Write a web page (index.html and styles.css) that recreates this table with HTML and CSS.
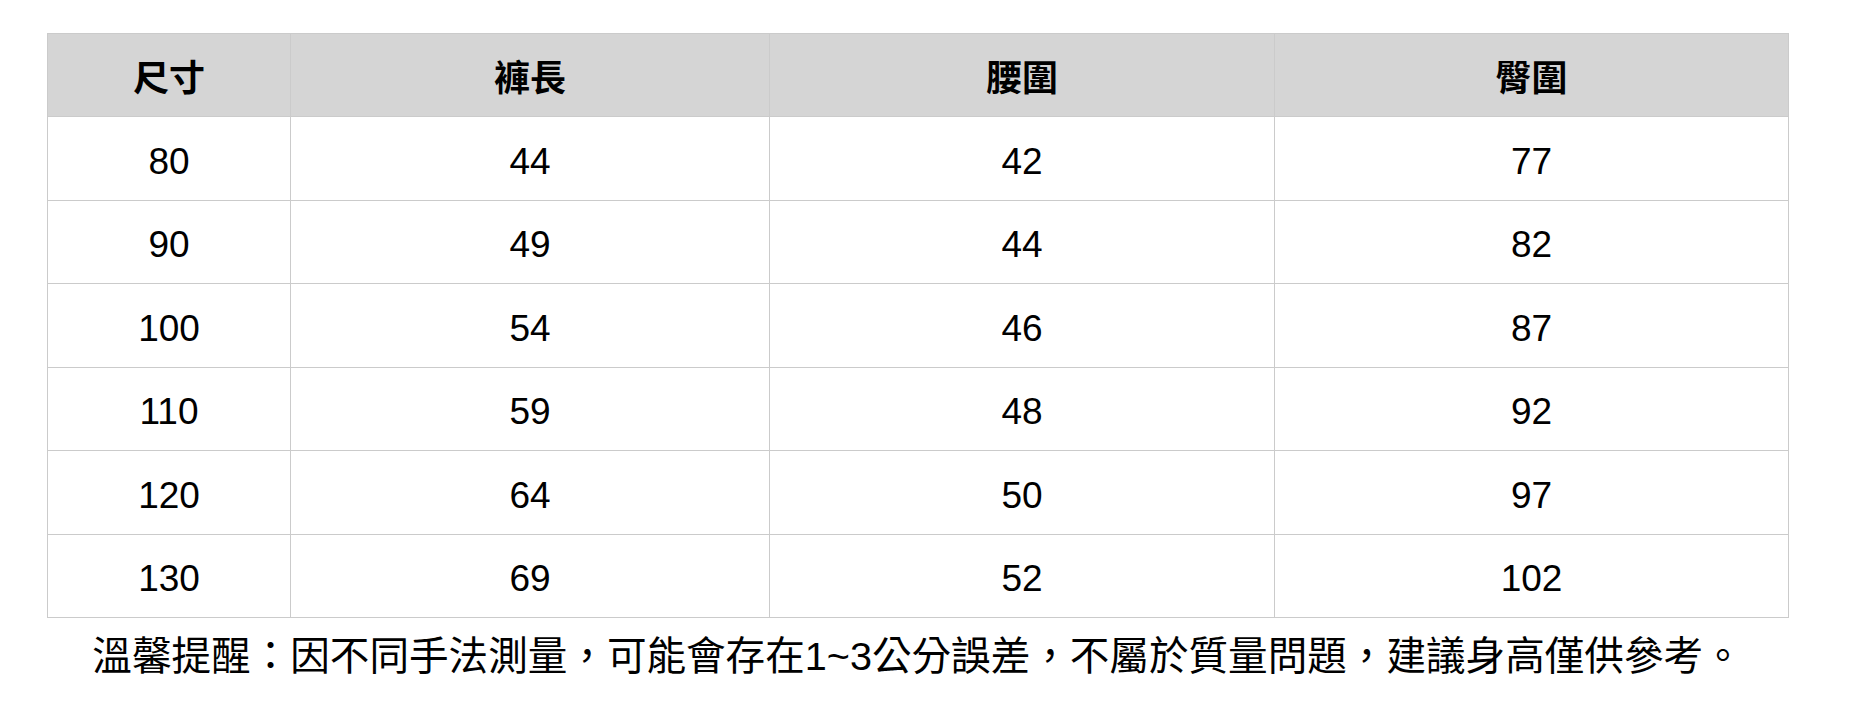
FILE: index.html
```html
<!DOCTYPE html>
<html lang="zh-Hant">
<head>
<meta charset="utf-8">
<title>尺寸表</title>
<link rel="stylesheet" href="styles.css">
</head>
<body>
<div class="wrap">
  <table class="size-table">
    <colgroup>
      <col class="c1"><col class="c2"><col class="c3"><col class="c4">
    </colgroup>
    <thead>
      <tr><th>尺寸</th><th>褲長</th><th>腰圍</th><th>臀圍</th></tr>
    </thead>
    <tbody>
      <tr><td>80</td><td>44</td><td>42</td><td>77</td></tr>
      <tr><td>90</td><td>49</td><td>44</td><td>82</td></tr>
      <tr><td>100</td><td>54</td><td>46</td><td>87</td></tr>
      <tr><td>110</td><td>59</td><td>48</td><td>92</td></tr>
      <tr><td>120</td><td>64</td><td>50</td><td>97</td></tr>
      <tr><td>130</td><td>69</td><td>52</td><td>102</td></tr>
    </tbody>
  </table>
  <p class="note">溫馨提醒：因不同手法測量，可能會存在1~3公分誤差，不屬於質量問題，建議身高僅供參考。</p>
</div>
</body>
</html>
```

FILE: styles.css
```css
html, body {
  margin: 0;
  padding: 0;
  background: #ffffff;
}
body {
  font-family: "Liberation Sans", "Noto Sans CJK TC", sans-serif;
  color: #000000;
}
.wrap {
  width: 1741px;
  padding: 33px 0 0 47px;
}
.size-table {
  width: 1741px;
  border-collapse: collapse;
  table-layout: fixed;
}
.c1 { width: 243px; }
.c2 { width: 479px; }
.c3 { width: 505px; }
.c4 { width: 514px; }
.size-table th,
.size-table td {
  border: 1px solid #cbcbcb;
  text-align: center;
  vertical-align: middle;
  padding: 0;
}
.size-table thead tr {
  height: 83px;
}
.size-table th {
  background: #d5d5d5;
  font-family: "Noto Sans CJK TC", sans-serif;
  font-weight: 700;
  font-size: 36px;
}
.size-table tbody tr {
  height: 83.5px;
}
.size-table td {
  font-size: 37px;
  padding-top: 7px;
}
.note {
  margin: 13px 0 0;
  font-family: "Liberation Sans", "Noto Sans CJK TC", sans-serif;
  font-size: 39.6px;
  line-height: 50px;
  text-align: center;
  white-space: nowrap;
}
```
